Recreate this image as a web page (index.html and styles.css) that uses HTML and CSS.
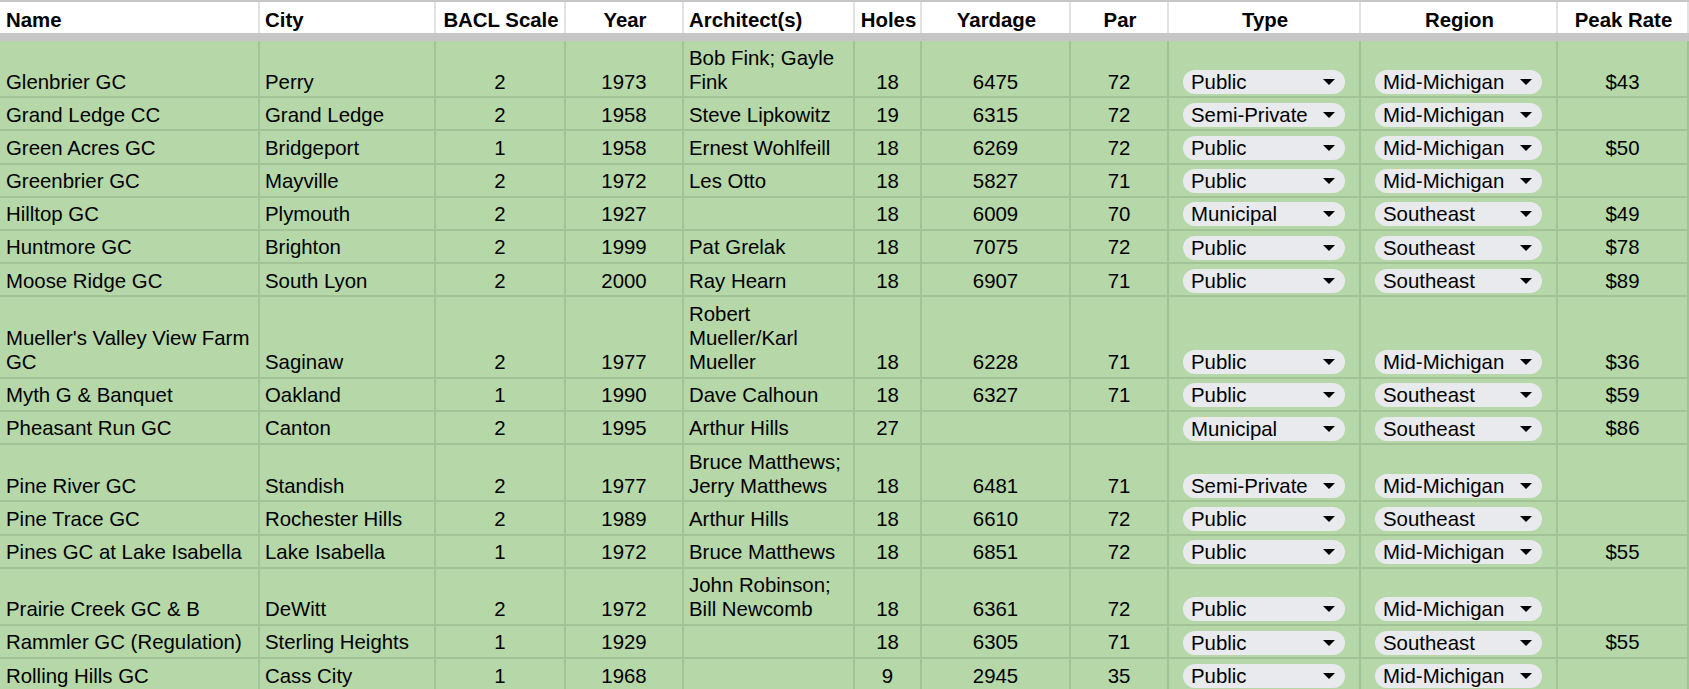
FILE: index.html
```html
<!DOCTYPE html>
<html lang="en">
<head>
<meta charset="utf-8">
<title>Golf Courses</title>
<link rel="stylesheet" href="styles.css">
</head>
<body>
<table class="sheet">
  <colgroup>
    <col class="w-name"><col class="w-city"><col class="w-bacl"><col class="w-year"><col class="w-arch"><col class="w-holes"><col class="w-yard"><col class="w-par"><col class="w-type"><col class="w-region"><col class="w-rate">
  </colgroup>
  <thead>
    <tr>
      <th class="l">Name</th>
      <th class="l">City</th>
      <th>BACL Scale</th>
      <th>Year</th>
      <th class="l">Architect(s)</th>
      <th>Holes</th>
      <th>Yardage</th>
      <th>Par</th>
      <th>Type</th>
      <th>Region</th>
      <th>Peak Rate</th>
    </tr>
  </thead>
  <tbody>
    <tr>
      <td class="l">Glenbrier GC</td><td class="l">Perry</td><td>2</td><td>1973</td><td class="l">Bob Fink; Gayle<br>Fink</td><td>18</td><td>6475</td><td>72</td>
      <td class="chipcell"><div class="chip"><span>Public</span><svg class="caret" viewBox="0 0 12 6" width="12" height="6"><path d="M0 0h12L6 6z"/></svg></div></td>
      <td class="chipcell"><div class="chip"><span>Mid-Michigan</span><svg class="caret" viewBox="0 0 12 6" width="12" height="6"><path d="M0 0h12L6 6z"/></svg></div></td>
      <td>$43</td>
    </tr>
    <tr>
      <td class="l">Grand Ledge CC</td><td class="l">Grand Ledge</td><td>2</td><td>1958</td><td class="l">Steve Lipkowitz</td><td>19</td><td>6315</td><td>72</td>
      <td class="chipcell"><div class="chip"><span>Semi-Private</span><svg class="caret" viewBox="0 0 12 6" width="12" height="6"><path d="M0 0h12L6 6z"/></svg></div></td>
      <td class="chipcell"><div class="chip"><span>Mid-Michigan</span><svg class="caret" viewBox="0 0 12 6" width="12" height="6"><path d="M0 0h12L6 6z"/></svg></div></td>
      <td></td>
    </tr>
    <tr>
      <td class="l">Green Acres GC</td><td class="l">Bridgeport</td><td>1</td><td>1958</td><td class="l">Ernest Wohlfeill</td><td>18</td><td>6269</td><td>72</td>
      <td class="chipcell"><div class="chip"><span>Public</span><svg class="caret" viewBox="0 0 12 6" width="12" height="6"><path d="M0 0h12L6 6z"/></svg></div></td>
      <td class="chipcell"><div class="chip"><span>Mid-Michigan</span><svg class="caret" viewBox="0 0 12 6" width="12" height="6"><path d="M0 0h12L6 6z"/></svg></div></td>
      <td>$50</td>
    </tr>
    <tr>
      <td class="l">Greenbrier GC</td><td class="l">Mayville</td><td>2</td><td>1972</td><td class="l">Les Otto</td><td>18</td><td>5827</td><td>71</td>
      <td class="chipcell"><div class="chip"><span>Public</span><svg class="caret" viewBox="0 0 12 6" width="12" height="6"><path d="M0 0h12L6 6z"/></svg></div></td>
      <td class="chipcell"><div class="chip"><span>Mid-Michigan</span><svg class="caret" viewBox="0 0 12 6" width="12" height="6"><path d="M0 0h12L6 6z"/></svg></div></td>
      <td></td>
    </tr>
    <tr>
      <td class="l">Hilltop GC</td><td class="l">Plymouth</td><td>2</td><td>1927</td><td class="l"></td><td>18</td><td>6009</td><td>70</td>
      <td class="chipcell"><div class="chip"><span>Municipal</span><svg class="caret" viewBox="0 0 12 6" width="12" height="6"><path d="M0 0h12L6 6z"/></svg></div></td>
      <td class="chipcell"><div class="chip"><span>Southeast</span><svg class="caret" viewBox="0 0 12 6" width="12" height="6"><path d="M0 0h12L6 6z"/></svg></div></td>
      <td>$49</td>
    </tr>
    <tr>
      <td class="l">Huntmore GC</td><td class="l">Brighton</td><td>2</td><td>1999</td><td class="l">Pat Grelak</td><td>18</td><td>7075</td><td>72</td>
      <td class="chipcell"><div class="chip"><span>Public</span><svg class="caret" viewBox="0 0 12 6" width="12" height="6"><path d="M0 0h12L6 6z"/></svg></div></td>
      <td class="chipcell"><div class="chip"><span>Southeast</span><svg class="caret" viewBox="0 0 12 6" width="12" height="6"><path d="M0 0h12L6 6z"/></svg></div></td>
      <td>$78</td>
    </tr>
    <tr>
      <td class="l">Moose Ridge GC</td><td class="l">South Lyon</td><td>2</td><td>2000</td><td class="l">Ray Hearn</td><td>18</td><td>6907</td><td>71</td>
      <td class="chipcell"><div class="chip"><span>Public</span><svg class="caret" viewBox="0 0 12 6" width="12" height="6"><path d="M0 0h12L6 6z"/></svg></div></td>
      <td class="chipcell"><div class="chip"><span>Southeast</span><svg class="caret" viewBox="0 0 12 6" width="12" height="6"><path d="M0 0h12L6 6z"/></svg></div></td>
      <td>$89</td>
    </tr>
    <tr>
      <td class="l">Mueller's Valley View Farm<br>GC</td><td class="l">Saginaw</td><td>2</td><td>1977</td><td class="l">Robert<br>Mueller/Karl<br>Mueller</td><td>18</td><td>6228</td><td>71</td>
      <td class="chipcell"><div class="chip"><span>Public</span><svg class="caret" viewBox="0 0 12 6" width="12" height="6"><path d="M0 0h12L6 6z"/></svg></div></td>
      <td class="chipcell"><div class="chip"><span>Mid-Michigan</span><svg class="caret" viewBox="0 0 12 6" width="12" height="6"><path d="M0 0h12L6 6z"/></svg></div></td>
      <td>$36</td>
    </tr>
    <tr>
      <td class="l">Myth G &amp; Banquet</td><td class="l">Oakland</td><td>1</td><td>1990</td><td class="l">Dave Calhoun</td><td>18</td><td>6327</td><td>71</td>
      <td class="chipcell"><div class="chip"><span>Public</span><svg class="caret" viewBox="0 0 12 6" width="12" height="6"><path d="M0 0h12L6 6z"/></svg></div></td>
      <td class="chipcell"><div class="chip"><span>Southeast</span><svg class="caret" viewBox="0 0 12 6" width="12" height="6"><path d="M0 0h12L6 6z"/></svg></div></td>
      <td>$59</td>
    </tr>
    <tr>
      <td class="l">Pheasant Run GC</td><td class="l">Canton</td><td>2</td><td>1995</td><td class="l">Arthur Hills</td><td>27</td><td></td><td></td>
      <td class="chipcell"><div class="chip"><span>Municipal</span><svg class="caret" viewBox="0 0 12 6" width="12" height="6"><path d="M0 0h12L6 6z"/></svg></div></td>
      <td class="chipcell"><div class="chip"><span>Southeast</span><svg class="caret" viewBox="0 0 12 6" width="12" height="6"><path d="M0 0h12L6 6z"/></svg></div></td>
      <td>$86</td>
    </tr>
    <tr>
      <td class="l">Pine River GC</td><td class="l">Standish</td><td>2</td><td>1977</td><td class="l">Bruce Matthews;<br>Jerry Matthews</td><td>18</td><td>6481</td><td>71</td>
      <td class="chipcell"><div class="chip"><span>Semi-Private</span><svg class="caret" viewBox="0 0 12 6" width="12" height="6"><path d="M0 0h12L6 6z"/></svg></div></td>
      <td class="chipcell"><div class="chip"><span>Mid-Michigan</span><svg class="caret" viewBox="0 0 12 6" width="12" height="6"><path d="M0 0h12L6 6z"/></svg></div></td>
      <td></td>
    </tr>
    <tr>
      <td class="l">Pine Trace GC</td><td class="l">Rochester Hills</td><td>2</td><td>1989</td><td class="l">Arthur Hills</td><td>18</td><td>6610</td><td>72</td>
      <td class="chipcell"><div class="chip"><span>Public</span><svg class="caret" viewBox="0 0 12 6" width="12" height="6"><path d="M0 0h12L6 6z"/></svg></div></td>
      <td class="chipcell"><div class="chip"><span>Southeast</span><svg class="caret" viewBox="0 0 12 6" width="12" height="6"><path d="M0 0h12L6 6z"/></svg></div></td>
      <td></td>
    </tr>
    <tr>
      <td class="l">Pines GC at Lake Isabella</td><td class="l">Lake Isabella</td><td>1</td><td>1972</td><td class="l">Bruce Matthews</td><td>18</td><td>6851</td><td>72</td>
      <td class="chipcell"><div class="chip"><span>Public</span><svg class="caret" viewBox="0 0 12 6" width="12" height="6"><path d="M0 0h12L6 6z"/></svg></div></td>
      <td class="chipcell"><div class="chip"><span>Mid-Michigan</span><svg class="caret" viewBox="0 0 12 6" width="12" height="6"><path d="M0 0h12L6 6z"/></svg></div></td>
      <td>$55</td>
    </tr>
    <tr>
      <td class="l">Prairie Creek GC &amp; B</td><td class="l">DeWitt</td><td>2</td><td>1972</td><td class="l">John Robinson;<br>Bill Newcomb</td><td>18</td><td>6361</td><td>72</td>
      <td class="chipcell"><div class="chip"><span>Public</span><svg class="caret" viewBox="0 0 12 6" width="12" height="6"><path d="M0 0h12L6 6z"/></svg></div></td>
      <td class="chipcell"><div class="chip"><span>Mid-Michigan</span><svg class="caret" viewBox="0 0 12 6" width="12" height="6"><path d="M0 0h12L6 6z"/></svg></div></td>
      <td></td>
    </tr>
    <tr>
      <td class="l">Rammler GC (Regulation)</td><td class="l">Sterling Heights</td><td>1</td><td>1929</td><td class="l"></td><td>18</td><td>6305</td><td>71</td>
      <td class="chipcell"><div class="chip"><span>Public</span><svg class="caret" viewBox="0 0 12 6" width="12" height="6"><path d="M0 0h12L6 6z"/></svg></div></td>
      <td class="chipcell"><div class="chip"><span>Southeast</span><svg class="caret" viewBox="0 0 12 6" width="12" height="6"><path d="M0 0h12L6 6z"/></svg></div></td>
      <td>$55</td>
    </tr>
    <tr>
      <td class="l">Rolling Hills GC</td><td class="l">Cass City</td><td>1</td><td>1968</td><td class="l"></td><td>9</td><td>2945</td><td>35</td>
      <td class="chipcell"><div class="chip"><span>Public</span><svg class="caret" viewBox="0 0 12 6" width="12" height="6"><path d="M0 0h12L6 6z"/></svg></div></td>
      <td class="chipcell"><div class="chip"><span>Mid-Michigan</span><svg class="caret" viewBox="0 0 12 6" width="12" height="6"><path d="M0 0h12L6 6z"/></svg></div></td>
      <td></td>
    </tr>
  </tbody>
</table>
</body>
</html>
```
FILE: styles.css
```css
html, body {
  margin: 0;
  padding: 0;
  background: #ffffff;
  overflow: hidden;
}

body {
  font-family: "Liberation Sans", Arial, sans-serif;
  font-size: 20.4px;
  color: #000;
}

.sheet {
  border-collapse: separate;
  border-spacing: 0;
  table-layout: fixed;
  width: 1689px;
}

.w-name { width: 260px; }
.w-city { width: 176px; }
.w-bacl { width: 130px; }
.w-year { width: 118px; }
.w-arch { width: 171px; }
.w-holes { width: 67px; }
.w-yard { width: 149px; }
.w-par { width: 98px; }
.w-type { width: 192px; }
.w-region { width: 197px; }
.w-rate { width: 131px; }

.sheet th {
  font-weight: bold;
  text-align: center;
  vertical-align: bottom;
  white-space: nowrap;
  line-height: 24px;
  padding: 6px 5px 1px;
  border-top: 2px solid #c6c6c6;
  border-bottom: 8px solid #c6c6c6;
  background: linear-gradient(#e2e2e2, #e2e2e2) right top / 2px 100% no-repeat, #ffffff;
  background-clip: padding-box;
}

.sheet td {
  background: #b6d7a8;
  text-align: center;
  vertical-align: bottom;
  white-space: nowrap;
  line-height: 24.15px;
  padding: 4.5px 5px 2.5px;
  border-right: 2px solid #a2c396;
  border-bottom: 2px solid #a2c396;
  overflow: hidden;
}

.sheet .l {
  text-align: left;
}

.sheet tr > .l:first-child {
  padding-left: 6px;
}

.sheet td.chipcell {
  padding-left: 14px;
  padding-right: 14px;
}

.chip {
  display: flex;
  align-items: center;
  justify-content: space-between;
  height: 24px;
  padding: 0 10px 0 8px;
  border-radius: 12px;
  background: #e8eaed;
  text-align: left;
}

.chip span {
  line-height: 24px;
}

.caret {
  flex: none;
  fill: #000;
}
```
